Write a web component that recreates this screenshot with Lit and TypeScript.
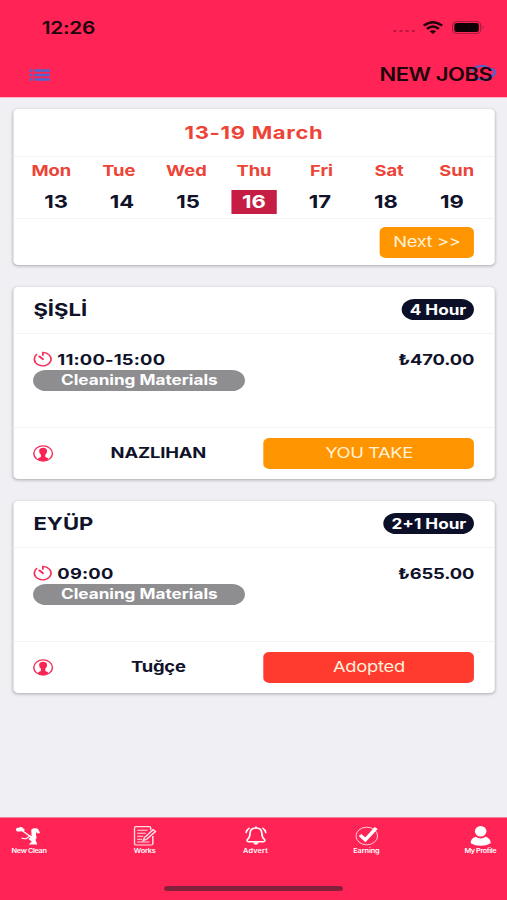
import { LitElement, html, css, svg } from "lit";
import { customElement, property } from "lit/decorators.js";

const timerIcon = svg`<svg width="16" height="17" viewBox="0 0 16 17" fill="none" stroke="#f5305c" stroke-width="1.400" stroke-linecap="round"><path d="M2.900 3.500A6.800 6.700 0 1 0 8 1.400V4.200"/><path d="M5.200 5.400L8 8.200" stroke-width="1.900"/></svg>`;
const personIcon = svg`<svg width="17" height="17" viewBox="0 0 17 17"><circle cx="8.2" cy="8.5" r="7.600" fill="none" stroke="#f0305a" stroke-width="1.200"/><path fill="#fa2453" d="M8.200 2.800C5.900 2.800 4.900 4.100 5 6.200c0 1.500.6 2.600 1.400 3.300v2.200c-.4.700-1.200.8-2.200 1.400L4.500 15A7 7 0 0 0 8.200 16a7 7 0 0 0 3.700-1l.3-1.900c-1-.6-1.800-.7-2.200-1.400V9.500c.8-.7 1.400-1.800 1.400-3.300C11.500 4.100 10.500 2.800 8.200 2.800z"/></svg>`;

const tabs = [
  { id: "clean", label: "New Clean", icon: svg`<svg width="20" height="19" viewBox="0 0 20 19" fill="#fff"><path d="M0 3C0 1.500 1.500 1 2.500 1.200 3.500-.1 5.600.4 6 2 7.500 2.200 7.500 4.300 6 4.700L2.500 5C.8 5.200-.1 4.300 0 3z"/><path d="M5.500 4.500L13 11M4.500 11.500L8 12.500 12 9" stroke="#fff" stroke-width="1" fill="none"/><path d="M12.500 3.500C13 1.500 17 1.200 18 2.600L19.800 6.500 17.800 7 16.800 5.500 16.300 8.500C17.300 10 16.800 12 16 13.500L17.500 18H10.500L13 15 10.200 12.600 12.800 9.500z"/></svg>` },
  { id: "works", label: "Works", icon: svg`<svg width="19" height="20" viewBox="0 0 19 20" fill="none" stroke="#fff" stroke-opacity=".85"><path d="M14 4V1.800Q14 .7 13 .7H2Q.8.7.8 2V17.500Q.8 19 2 19H14.500Q15.800 19 15.800 17.500V10" stroke-width="1.200"/><path d="M3 4.200h8.500M3 7.200h7M3 10.200h5M3 13.200h4M3 16h10" stroke-width="1"/><path d="M8 14.500l1-3 7-7.800 2 1.800-7.200 7.800z" stroke-width="1.300"/></svg>` },
  { id: "advert", label: "Advert", icon: svg`<svg width="18" height="19" viewBox="0 0 18 19" fill="none" stroke="#fff" stroke-width="1.400" stroke-linecap="round"><path d="M9 1.500C5.500 1.500 4.200 4 4.200 6.800 4.200 10.500 3.500 11.500 2 13Q1.200 15 3 15.200H15Q16.800 15 16 13C14.500 11.500 13.800 10.500 13.800 6.800 13.800 4 12.500 1.500 9 1.500zM1 6Q1.300 3.500 3.300 1.800M17 6Q16.700 3.500 14.700 1.800"/><path d="M6.500 16Q9 20.500 11.500 16z" fill="#fff" stroke="none"/><path d="M9 .5v1"/></svg>` },
  { id: "earning", label: "Earning", icon: svg`<svg width="19" height="20" viewBox="0 0 19 20" fill="none" stroke="#fff"><circle cx="9.500" cy="10" r="8.800" stroke-width=".7"/><path d="M4 9L8.300 13.800 17.200 2" stroke-width="3"/></svg>` },
  { id: "profile", label: "My Profile", icon: svg`<svg width="17" height="20" viewBox="0 0 17 20" fill="#fff"><ellipse cx="8.500" cy="5.200" rx="4.700" ry="5.200"/><path d="M4.500 10.800Q8.500 14 12.500 10.800C15.500 11.800 16.700 14 16.700 17.200Q13 19.700 8.500 19.700T.3 17.200C.3 14 1.500 11.800 4.500 10.800z"/></svg>` },
];

@customElement("job-card")
class JobCard extends LitElement {
  @property() district = "";
  @property() hours = "";
  @property() time = "";
  @property() price = "";
  @property() person = "";
  @property() action = "";
  @property({ type: Boolean }) adopted = false;

  static styles = css`
    :host { display: flex; flex-direction: column; box-sizing: border-box; height: 192.500px; background: #fff; border-radius: 4px; box-shadow: 0 1px 3px rgba(0,0,0,.3); color: #10122a; font-weight: 650; font-size: 15px; letter-spacing: .15px; }
    .head, .main, .foot { display: flex; padding: 0 16.200px 0 16px; box-sizing: border-box; }
    .head { height: 47px; align-items: center; justify-content: space-between; border-bottom: 1px solid #f3f3f5; }
    .district { font-size: 18px; letter-spacing: 0; }
    .hours { background: #0b0f28; color: #fff; border-radius: 11px; height: 21px; line-height: 21px; font-size: 14px; padding: 0 6.500px; letter-spacing: 0; }
    .main { height: 94px; flex-direction: column; padding-top: 16px; border-bottom: 1px solid #f3f3f5; }
    .line { display: flex; height: 20px; align-items: center; gap: 3.500px; line-height: 18px; }
    .line svg { margin-top: -1px; }
    .time { letter-spacing: .15px; }
    .price { margin-left: auto; letter-spacing: -.1px; }
    .tag { width: 173px; height: 21px; border-radius: 11px; background: #8e8e91; color: #fff; text-align: center; line-height: 19.500px; font-size: 14px; letter-spacing: 0; }
    .foot { flex: 1; align-items: center; }
    .name { flex: 1; text-align: center; letter-spacing: -.15px; margin: 0 1px 1px 0; }
    .button { width: 172px; height: 31px; line-height: 30px; border-radius: 5px; background: #ff9500; color: #fff1d8; text-align: center; font-weight: 400; letter-spacing: -.35px; }
    .adopted { background: #ff3b30; letter-spacing: -.22px; }
    svg { display: block; flex: none; }
  `;

  render() {
    return html`
      <div class="head"><span class="district">${this.district}</span><span class="hours">${this.hours}</span></div>
      <div class="main">
        <div class="line">${timerIcon}<span class="time">${this.time}</span><span class="price">${this.price}</span></div>
        <div class="tag">Cleaning Materials</div>
      </div>
      <div class="foot">${personIcon}<span class="name">${this.person}</span><div class="button ${this.adopted ? "adopted" : ""}">${this.action}</div></div>
    `;
  }
}

@customElement("app-root")
class AppRoot extends LitElement {
  static styles = css`
    :host { display: block; width: 507px; height: 900px; overflow: hidden; }
    .screen { display: flex; flex-direction: column; width: 414px; height: 900px; transform: scaleX(1.22464); transform-origin: 0 0; background: #efeff4; font-family: Inter, "Liberation Sans", sans-serif; color: #10122a; }
    .header { height: 98px; box-sizing: border-box; background: #ff2455; border-bottom: 1px solid #ffb3c4; color: #20040c; font-weight: 600; }
    .status { display: flex; align-items: center; height: 54px; padding: 0 18.500px 0 34px; }
    .clock { font-size: 17px; letter-spacing: -.2px; flex: 1; padding-top: 2px; }
    .signal { display: flex; gap: 2.500px; margin: 8px 6px 0 0; }
    .signal i { width: 2.500px; height: 2.500px; border-radius: 50%; background: #b9183f; }
    .wifi { margin-right: 7px; }
    .nav { display: flex; justify-content: space-between; align-items: center; height: 41px; padding: 0 12px 0 23.500px; }
    .title { position: relative; font-size: 18px; letter-spacing: -.4px; }
    .refresh { position: absolute; right: -2.500px; top: 0; }
    .title span { position: relative; }
    .content { flex: 1; display: flex; flex-direction: column; gap: 21.500px; padding: 11px 10.500px 0 11.300px; }
    .week { height: 156px; background: #fff; border-radius: 4px; box-shadow: 0 1px 3px rgba(0,0,0,.3); }
    .range { height: 47px; line-height: 47px; text-align: center; font-size: 18px; font-weight: 650; color: #ed4438; letter-spacing: .55px; border-bottom: 1px solid #f3f3f5; }
    .days, .dates { display: grid; grid-template-columns: repeat(7, 1fr); text-align: center; font-weight: 650; }
    .days { padding: 0 3px; height: 28px; line-height: 27px; color: #ed4438; font-size: 15px; letter-spacing: 0; }
    .dates { padding: 0 7.500px; height: 33px; align-items: center; justify-items: center; font-size: 18px; border-bottom: 1px solid #f3f3f5; }
    .date { width: 37.500px; height: 24px; line-height: 24px; }
    .today { background: #c61d45; color: #fff; }
    .pager { display: flex; justify-content: flex-end; padding: 7.500px 16.200px 0; }
    .next { width: 77.500px; height: 31px; line-height: 30px; border-radius: 5px; background: #ff9500; color: #fff1d8; text-align: center; font-size: 15px; letter-spacing: -.35px; }
    .tabs { position: relative; display: flex; gap: 71px; height: 83px; box-sizing: border-box; padding: 8px 0 0 10px; background: #ff2455; border-top: 1px solid #f77f9a; }
    .tab { flex: none; width: 21px; display: flex; flex-direction: column; align-items: center; color: #fff; font-size: 6px; font-weight: 600; line-height: 10px; white-space: nowrap; letter-spacing: -.1px; }
    .tab svg { height: 20px; flex: none; }
    .clean { width: 28.500px; letter-spacing: -.3px; margin-left: -.5px; }
    .clean svg { margin-left: -2px; }
    .works { width: 17px; letter-spacing: -.15px; margin-left: .7px; }
    .works svg { margin-left: 1px; }
    .advert { letter-spacing: .15px; margin-left: .5px; }
    .earning { margin-left: -1.500px; }
    .profile { width: 27px; margin-left: -2px; letter-spacing: -.35px; }
    .bar { position: absolute; left: 134px; top: 68px; width: 146px; height: 5px; border-radius: 3px; background: #84203c; }
    svg { display: block; }
  `;

  render() {
    return html`
      <div class="screen">
        <header class="header">
          <div class="status">
            <span class="clock">12:26</span>
            <span class="signal"><i></i><i></i><i></i><i></i></span>
            <svg class="wifi" width="17" height="13" viewBox="0 0 17 13" fill="none" stroke="#20040c" stroke-width="2.400"><path d="M1 4.600Q8.500-2.200 16 4.600M3.700 7.800Q8.500 3.400 13.300 7.800"/><path d="M5.800 10.300Q8.500 8 11.200 10.300L8.500 13z" fill="#20040c" stroke="none"/></svg>
            <svg width="27" height="13" viewBox="0 0 27 13"><rect x=".5" y=".5" width="23" height="12" rx="3.500" fill="none" stroke="#ae1b40"/><rect x="2" y="2" width="20" height="9" rx="2" fill="#100005"/><path d="M25 4.500q2 2 0 4z" fill="#ae1b40"/></svg>
          </div>
          <div class="nav">
            <svg width="17" height="12" viewBox="0 0 17 12" stroke="#5064d0" stroke-width="2.500"><path d="M0 1.500h2.500M4 1.500H17M0 6h2.500M4 6H17M0 10.500h2.500M4 10.500H17"/></svg>
            <div class="title">
              <svg class="refresh" width="21" height="18" viewBox="0 0 21 18" fill="none" stroke="#4f64d2" stroke-width="2"><path d="M1.500 7.500A8 7.500 0 0 1 16.500 6.500M3.500 12.500A7.800 6.200 0 0 0 16 13.500"/><path d="M15 5.500Q20.500 4.500 20 8.500 19.500 11.500 16 13.500"/></svg>
              <span>NEW JOBS</span>
            </div>
          </div>
        </header>
        <main class="content">
          <section class="week">
            <div class="range">13-19 March</div>
            <div class="days">${["Mon", "Tue", "Wed", "Thu", "Fri", "Sat", "Sun"].map((d) => html`<span>${d}</span>`)}</div>
            <div class="dates">${[13, 14, 15, 16, 17, 18, 19].map((d) => html`<span class="date ${d === 16 ? "today" : ""}">${d}</span>`)}</div>
            <div class="pager"><div class="next">Next &gt;&gt;</div></div>
          </section>
          <job-card district="ŞİŞLİ" hours="4 Hour" time="11:00-15:00" price="₺470.00" person="NAZLIHAN" action="YOU TAKE"></job-card>
          <job-card district="EYÜP" hours="2+1 Hour" time="09:00" price="₺655.00" person="Tuğçe" action="Adopted" adopted></job-card>
        </main>
        <footer class="tabs">
          ${tabs.map((t) => html`<div class="tab ${t.id}">${t.icon}<span>${t.label}</span></div>`)}
          <div class="bar"></div>
        </footer>
      </div>
    `;
  }
}
